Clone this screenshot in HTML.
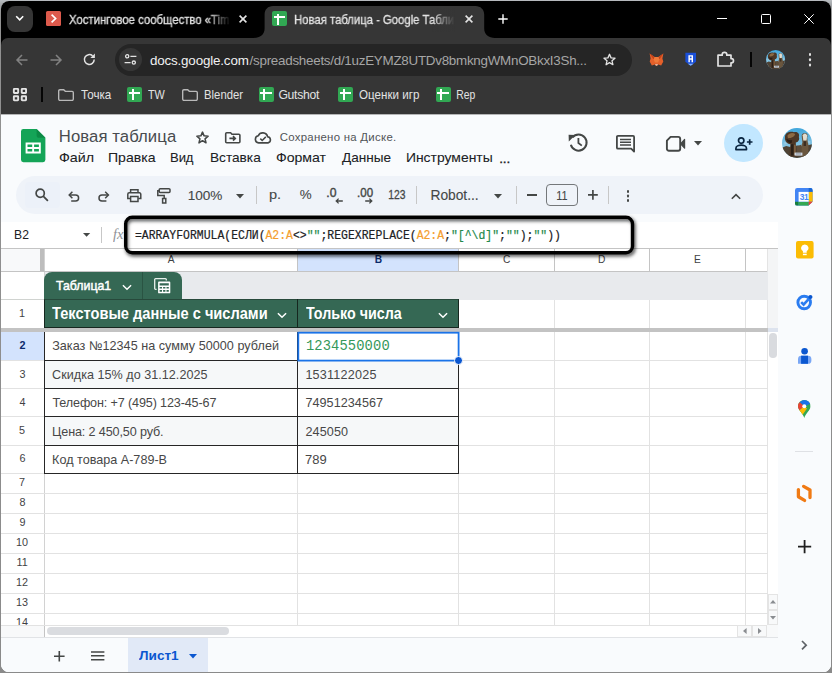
<!DOCTYPE html>
<html lang="ru"><head><meta charset="utf-8"><title>Новая таблица - Google Таблицы</title>
<style>
html,body{margin:0;padding:0}
body{width:832px;height:673px;overflow:hidden;position:relative;background:linear-gradient(#b8bcc0 0,#a6a9ac 4px,#929292 14px,#8a8a8a 100%);font-family:"Liberation Sans",sans-serif}
#win{position:absolute;left:1px;top:1px;width:830px;height:671px;border-radius:8px;overflow:hidden;background:#f9fbfd}
/* every child is positioned in page coordinates: shift by -1,-1 */
#o{position:absolute;left:-1px;top:-1px;width:832px;height:673px}
.a,.t,svg{position:absolute}
.t{white-space:pre;display:block}
svg{overflow:visible}

</style></head>
<body>
<div id="win">
<div id="o">
<!-- browser chrome -->
<div class="a" style="left:0;top:0;width:832px;height:52px;background:#000"></div>
<div class="a" style="left:1px;top:38px;width:830px;height:76px;background:#363636;border-radius:7px 7px 0 0"></div>
<svg style="left:253.5px;top:6px" width="241" height="32" viewBox="0 0 241 32"><path d="M0 32 C6 32 10.6 28.5 10.6 22.5 L10.6 8.5 C10.6 3.5 14 0 19 0 L221.5 0 C226.5 0 230.2 3.5 230.2 8.5 L230.2 22.5 C230.2 28.5 234.8 32 240.8 32 Z" fill="#363636"/></svg>
<div class="a" style="left:7px;top:6px;width:26px;height:26px;border-radius:8px;background:#363636"></div>
<svg style="left:15.2px;top:15.2px" width="9.4" height="7" viewBox="0 0 9.4 7"><path d="M1.2 1.3 L4.7 4.8 L8.2 1.3" fill="none" stroke="#fff" stroke-width="1.6"/></svg>
<div class="a" style="left:46.3px;top:11.4px;width:15.2px;height:15px;border-radius:1.5px;background:#dd5a4c"></div>
<svg style="left:46.3px;top:11.4px" width="15.2" height="15" viewBox="0 0 15.2 15"><path d="M5.6 3.6 L9.6 7.5 L5.6 11.4" fill="none" stroke="#fff" stroke-width="1.7"/></svg>
<svg style="left:239.4px;top:15.2px" width="8" height="8" viewBox="0 0 8 8"><path d="M0.6 0.6 L7.4 7.4 M7.4 0.6 L0.6 7.4" fill="none" stroke="#e3e3e3" stroke-width="1.6"/></svg>
<div class="a" style="left:272px;top:11.4px;width:15px;height:15px;border-radius:2px;background:#31a853"></div><div class="a" style="left:276.50px;top:13.65px;width:2px;height:10.95px;background:#fff"></div><div class="a" style="left:273.50px;top:16.20px;width:11.70px;height:2px;background:#fff"></div>
<svg style="left:464.6px;top:15.2px" width="8" height="8" viewBox="0 0 8 8"><path d="M0.6 0.6 L7.4 7.4 M7.4 0.6 L0.6 7.4" fill="none" stroke="#e3e3e3" stroke-width="1.6"/></svg>
<svg style="left:497.7px;top:14px" width="10" height="10" viewBox="0 0 10 10"><path d="M5 0.3 V9.7 M0.3 5 H9.7" fill="none" stroke="#fff" stroke-width="1.4"/></svg>
<div class="a" style="left:717px;top:18px;width:10px;height:1px;background:#fff"></div>
<div class="a" style="left:761px;top:14px;width:8px;height:8px;border:1px solid #fff;border-radius:1.5px"></div>
<svg style="left:804px;top:14px" width="10" height="10" viewBox="0 0 10 10"><path d="M0.3 0.3 L9.7 9.7 M9.7 0.3 L0.3 9.7" fill="none" stroke="#fff" stroke-width="1"/></svg>
<svg style="left:15.7px;top:53.6px" width="12" height="12" viewBox="0 0 12 12"><path d="M11.5 6 H1.3 M6 1 L1 6 L6 11" fill="none" stroke="#828282" stroke-width="1.5"/></svg>
<svg style="left:49.8px;top:53.6px" width="12" height="12" viewBox="0 0 12 12"><path d="M0.5 6 H10.7 M6 1 L11 6 L6 11" fill="none" stroke="#828282" stroke-width="1.5"/></svg>
<svg style="left:83.4px;top:53.2px" width="13" height="13" viewBox="0 0 13 13"><path d="M11.2 6.5 A4.9 4.9 0 1 1 9.6 2.9" fill="none" stroke="#e3e3e3" stroke-width="1.5"/><path d="M7.4 4.9 H11.9 V0.6 Z" fill="#e3e3e3"/></svg>
<div class="a" style="left:115px;top:44px;width:517px;height:32px;border-radius:16px;background:#252525"></div>
<div class="a" style="left:118.8px;top:48px;width:23.4px;height:23.4px;border-radius:50%;background:#363636"></div>
<svg style="left:124px;top:53.4px" width="13" height="13" viewBox="0 0 13 13"><g fill="none" stroke="#e3e3e3" stroke-width="1.3"><circle cx="3.2" cy="3.3" r="1.6"/><path d="M6.4 3.3 H12.4"/><circle cx="9.8" cy="9.6" r="1.6"/><path d="M0.6 9.6 H6.6"/></g></svg>
<span class="t" style="left:149.90px;top:54px;font:normal 13.4px/1 'Liberation Sans', sans-serif;color:#f1f1f1;letter-spacing:-0.164px;">docs.google.com</span>
<span class="t" style="left:249.60px;top:54px;font:normal 13.4px/1 'Liberation Sans', sans-serif;color:#a6a6a6;letter-spacing:-0.264px;">/spreadsheets/d/1uzEYMZ8UTDv8bmkngWMnOBkxI3Sh...</span>
<svg style="left:601.5px;top:52.3px" width="15" height="15" viewBox="0 0 24 24"><path d="M12 3.6 L14.5 9.4 L20.8 9.95 L16 14.1 L17.45 20.3 L12 17 L6.55 20.3 L8 14.1 L3.2 9.95 L9.5 9.4 Z" fill="none" stroke="#e3e3e3" stroke-width="2.1" stroke-linejoin="round"/></svg>
<svg style="left:649.4px;top:53px" width="15" height="14" viewBox="0 0 15 14"><path d="M0.6 0.5 L5.6 4 H9.4 L14.4 0.5 L13.4 5.6 L14.3 8.6 L12.2 12.4 L9 11.6 L8 13 H7 L6 11.6 L2.8 12.4 L0.7 8.6 L1.6 5.6 Z" fill="#e4602a"/><path d="M0.6 0.5 L5.6 4 L4.6 6.6 Z M14.4 0.5 L9.4 4 L10.4 6.6 Z" fill="#c2421a"/><path d="M5.6 4 H9.4 L10.4 6.6 L9 9.4 H6 L4.6 6.6 Z" fill="#ee7a3a"/><path d="M6 11.2 H9 L8.2 12.6 H6.8 Z" fill="#d9d2c8"/></svg>
<svg style="left:685.4px;top:52.4px" width="11.4" height="14.6" viewBox="0 0 12 15"><path d="M0.4 0.6 H11.6 V10.2 L6 14.4 L0.4 10.2 Z" fill="#1a4fd8"/><path d="M3.6 3.2 H8.4 V10.6 H6.9 V7.9 H5.1 V10.6 H3.6 Z M5.1 4.6 V6.4 H6.9 V4.6 Z" fill="#fff"/><path d="M3 12.3 L6 14.4 L9 12.3 Z" fill="#7fb0ff"/></svg>
<svg style="left:717.2px;top:50.6px" width="18" height="16.4" viewBox="0 0 18 16.4"><path d="M1 4.2 H5.2 V3.6 A2.3 2.3 0 0 1 9.8 3.6 V4.2 H14 V7.6 H14.4 A2.1 2.1 0 0 1 14.4 11.8 H14 V15 H1 Z" fill="none" stroke="#e3e3e3" stroke-width="1.7" stroke-linejoin="round"/></svg>
<div class="a" style="left:750px;top:52px;width:1.9px;height:15px;background:#050505"></div>
<svg style="left:766.4px;top:50.0px" width="19.2" height="19.2" viewBox="0 0 100 100"><defs><clipPath id="av1"><circle cx="50" cy="50" r="50"/></clipPath><linearGradient id="sk1" x1="0" y1="0" x2="0" y2="1"><stop offset="0" stop-color="#3fa6dc"/><stop offset="0.6" stop-color="#86c4e2"/></linearGradient></defs><g clip-path="url(#av1)"><rect width="100" height="100" fill="url(#sk1)"/><path d="M0 66 L14 60 L30 64 L50 58 L70 62 L100 54 V100 H0 Z" fill="#4f4234"/><path d="M8 46 L20 50 L8 56 Z M84 40 L96 46 L90 54 Z" fill="#9bcbe4"/><path d="M10 30 C10 16 26 10 40 14 C52 10 60 20 56 30 C60 38 54 48 46 48 L48 96 H24 L28 54 C16 54 8 42 10 30 Z" fill="#4d3726"/><path d="M18 26 C24 16 36 14 44 20 C42 28 32 34 20 34 Z" fill="#8c6a44"/><path d="M14 36 C20 40 28 42 34 40 L32 50 C24 52 16 46 14 36 Z" fill="#2a1e16"/><path d="M30 54 H38 V92 H30 Z" fill="#2a2018"/><path d="M40 56 H46 V90 H40 Z" fill="#7a5e40"/><path d="M66 30 C64 20 70 16 76 18 C84 16 88 24 84 32 L86 48 C90 56 88 72 86 96 H66 C64 76 62 60 68 48 Z" fill="#6a563e"/><path d="M69 24 C72 17 81 17 84 25 L82 42 H71 Z" fill="#e2dccf"/><path d="M72 44 H80 V60 H72 Z" fill="#3a2d22"/><path d="M50 60 L64 56 V80 H50 Z" fill="#5c4c3a"/><rect x="42" y="82" width="26" height="10" fill="#d3dbe6"/><rect x="46" y="85" width="18" height="3" fill="#7a8088"/></g></svg>
<div class="a" style="left:808.7px;top:53.1px;width:2.6px;height:2.6px;border-radius:50%;background:#e3e3e3;box-shadow:0 5.2px 0 #e3e3e3,0 10.4px 0 #e3e3e3"></div>
<svg style="left:0;top:0" width="40" height="110" viewBox="0 0 40 110"><rect x="13.85" y="88.85000000000001" width="4.3" height="4.1" rx="0.5" fill="none" stroke="#e3e3e3" stroke-width="1.9"/><rect x="21.75" y="88.85000000000001" width="4.3" height="4.1" rx="0.5" fill="none" stroke="#e3e3e3" stroke-width="1.9"/><rect x="13.85" y="96.25" width="4.3" height="4.1" rx="0.5" fill="none" stroke="#e3e3e3" stroke-width="1.9"/><rect x="21.75" y="96.25" width="4.3" height="4.1" rx="0.5" fill="none" stroke="#e3e3e3" stroke-width="1.9"/></svg>
<div class="a" style="left:40.8px;top:87.2px;width:1.9px;height:14.7px;background:#050505"></div>
<svg style="left:57.5px;top:88.6px" width="16" height="12" viewBox="0 0 16 12"><path d="M1.9 0.7 H5.7 L7.3 2.3 H14.1 A1.2 1.2 0 0 1 15.3 3.5 V10.1 A1.2 1.2 0 0 1 14.1 11.3 H1.9 A1.2 1.2 0 0 1 0.7 10.1 V1.9 A1.2 1.2 0 0 1 1.9 0.7 Z" fill="none" stroke="#b9b9b9" stroke-width="1.35"/></svg>
<span class="t" style="left:80.60px;top:89px;font:normal 12.2px/1 'Liberation Sans', sans-serif;color:#e3e3e3;transform:scaleX(0.9531);transform-origin:0px 0;">Точка</span>
<div class="a" style="left:127px;top:87px;width:15px;height:15px;border-radius:2px;background:#31a853"></div><div class="a" style="left:131.50px;top:89.25px;width:2px;height:10.95px;background:#fff"></div><div class="a" style="left:128.50px;top:91.80px;width:11.70px;height:2px;background:#fff"></div>
<span class="t" style="left:148.10px;top:89px;font:normal 12.2px/1 'Liberation Sans', sans-serif;color:#e3e3e3;transform:scaleX(0.8895);transform-origin:0px 0;">TW</span>
<svg style="left:181.5px;top:88.6px" width="16" height="12" viewBox="0 0 16 12"><path d="M1.9 0.7 H5.7 L7.3 2.3 H14.1 A1.2 1.2 0 0 1 15.3 3.5 V10.1 A1.2 1.2 0 0 1 14.1 11.3 H1.9 A1.2 1.2 0 0 1 0.7 10.1 V1.9 A1.2 1.2 0 0 1 1.9 0.7 Z" fill="none" stroke="#b9b9b9" stroke-width="1.35"/></svg>
<span class="t" style="left:204.30px;top:89px;font:normal 12.2px/1 'Liberation Sans', sans-serif;color:#e3e3e3;transform:scaleX(0.9268);transform-origin:1px 0;">Blender</span>
<div class="a" style="left:258.5px;top:87px;width:15px;height:15px;border-radius:2px;background:#31a853"></div><div class="a" style="left:263.00px;top:89.25px;width:2px;height:10.95px;background:#fff"></div><div class="a" style="left:260.00px;top:91.80px;width:11.70px;height:2px;background:#fff"></div>
<span class="t" style="left:278.40px;top:89px;font:normal 12.2px/1 'Liberation Sans', sans-serif;color:#e3e3e3;letter-spacing:-0.300px;">Gutshot</span>
<div class="a" style="left:338px;top:87px;width:15px;height:15px;border-radius:2px;background:#31a853"></div><div class="a" style="left:342.50px;top:89.25px;width:2px;height:10.95px;background:#fff"></div><div class="a" style="left:339.50px;top:91.80px;width:11.70px;height:2px;background:#fff"></div>
<span class="t" style="left:359.40px;top:89px;font:normal 12.2px/1 'Liberation Sans', sans-serif;color:#e3e3e3;transform:scaleX(0.9524);transform-origin:0px 0;">Оценки игр</span>
<div class="a" style="left:435.6px;top:87px;width:15px;height:15px;border-radius:2px;background:#31a853"></div><div class="a" style="left:440.10px;top:89.25px;width:2px;height:10.95px;background:#fff"></div><div class="a" style="left:437.10px;top:91.80px;width:11.70px;height:2px;background:#fff"></div>
<span class="t" style="left:456.10px;top:89px;font:normal 12.2px/1 'Liberation Sans', sans-serif;color:#e3e3e3;transform:scaleX(0.8524);transform-origin:1px 0;">Rep</span>
<!-- sheets header -->
<div class="a" style="left:0;top:114px;width:832px;height:559px;background:#f9fbfd"></div>
<div class="a" style="left:0;top:114px;width:832px;height:1px;background:#b4b5b6"></div>
<svg style="left:21px;top:129px" width="24.4" height="33.2" viewBox="0 0 24.4 33.2"><path d="M2.4 0 H15.6 L24.4 8.8 V30.8 A2.4 2.4 0 0 1 22 33.2 H2.4 A2.4 2.4 0 0 1 0 30.8 V2.4 A2.4 2.4 0 0 1 2.4 0 Z" fill="#14a457"/><path d="M15.6 0 L24.4 8.8 H17.6 A2 2 0 0 1 15.6 6.8 Z" fill="#0c8a45"/><path d="M4.6 13.6 H19.8 V24.4 H4.6 Z M6.5 15.5 V18 H11.2 V15.5 Z M13.1 15.5 V18 H17.9 V15.5 Z M6.5 19.9 V22.5 H11.2 V19.9 Z M13.1 19.9 V22.5 H17.9 V19.9 Z" fill="#fff" fill-rule="evenodd"/></svg>
<span class="t" style="left:58.80px;top:129px;font:normal 16.7px/1 'Liberation Sans', sans-serif;color:#484b4f;letter-spacing:0.083px;">Новая таблица</span>
<svg style="left:195px;top:130.2px" width="15" height="15" viewBox="0 0 24 24"><path d="M12 3.4 L14.55 9.35 L21 9.9 L16.1 14.15 L17.6 20.5 L12 17.1 L6.4 20.5 L7.9 14.15 L3 9.9 L9.45 9.35 Z" fill="none" stroke="#444746" stroke-width="2.5" stroke-linejoin="round"/></svg>
<svg style="left:225px;top:131.6px" width="15.6" height="11.4" viewBox="0 0 15.6 11.4"><path d="M1.7 0.7 H5.6 L7 2.2 H13.9 A1 1 0 0 1 14.9 3.2 V9.7 A1 1 0 0 1 13.9 10.7 H1.7 A1 1 0 0 1 0.7 9.7 V1.7 A1 1 0 0 1 1.7 0.7 Z" fill="none" stroke="#444746" stroke-width="1.6"/><path d="M4.4 6.4 H10 M8 4.2 L10.3 6.4 L8 8.6" fill="none" stroke="#444746" stroke-width="1.6"/></svg>
<svg style="left:254.2px;top:131.6px" width="18" height="11.6" viewBox="0 0 18 11.6"><path d="M4.6 10.9 A3.6 3.6 0 0 1 4.2 3.8 A5 5 0 0 1 13.6 4.7 A3.15 3.15 0 0 1 14 10.9 Z" fill="none" stroke="#444746" stroke-width="1.6" stroke-linejoin="round"/><path d="M6.3 6.6 L8.2 8.5 L11.8 4.9" fill="none" stroke="#444746" stroke-width="1.5"/></svg>
<span class="t" style="left:279.70px;top:132px;font:normal 11.4px/1 'Liberation Sans', sans-serif;color:#515458;letter-spacing:0.283px;">Сохранено на Диске.</span>
<span class="t" style="left:59.00px;top:151px;font:normal 13.1px/1 'Liberation Sans', sans-serif;color:#202124;transform:scaleX(1.0917);transform-origin:1px 0;-webkit-text-stroke:0.08px #202124;">Файл</span>
<span class="t" style="left:107.75px;top:151px;font:normal 13.1px/1 'Liberation Sans', sans-serif;color:#202124;transform:scaleX(1.0756);transform-origin:1px 0;-webkit-text-stroke:0.08px #202124;">Правка</span>
<span class="t" style="left:170.10px;top:151px;font:normal 13.1px/1 'Liberation Sans', sans-serif;color:#202124;letter-spacing:-0.175px;-webkit-text-stroke:0.08px #202124;">Вид</span>
<span class="t" style="left:209.90px;top:151px;font:normal 13.1px/1 'Liberation Sans', sans-serif;color:#202124;transform:scaleX(1.0437);transform-origin:1px 0;-webkit-text-stroke:0.08px #202124;">Вставка</span>
<span class="t" style="left:276.00px;top:151px;font:normal 13.1px/1 'Liberation Sans', sans-serif;color:#202124;transform:scaleX(1.0778);transform-origin:1px 0;-webkit-text-stroke:0.08px #202124;">Формат</span>
<span class="t" style="left:341.60px;top:151px;font:normal 13.1px/1 'Liberation Sans', sans-serif;color:#202124;transform:scaleX(1.0362);transform-origin:0px 0;-webkit-text-stroke:0.08px #202124;">Данные</span>
<span class="t" style="left:405.90px;top:151px;font:normal 13.1px/1 'Liberation Sans', sans-serif;color:#202124;transform:scaleX(1.0625);transform-origin:1px 0;-webkit-text-stroke:0.08px #202124;">Инструменты</span>
<span class="t" style="left:499.20px;top:152px;font:normal 13.6px/1 'Liberation Sans', sans-serif;color:#202124;letter-spacing:-0.100px;-webkit-text-stroke:0.35px #202124;">...</span>
<svg style="left:567.6px;top:133.2px" width="20" height="19.4" viewBox="0 0 20 19.4"><path d="M4.47 4.46 A8.0 8.0 0 1 1 2.87 11.67" fill="none" stroke="#444746" stroke-width="2"/><path d="M0.6 1.8 L7.4 2 L0.8 8.6 Z" fill="#444746"/><path d="M10.4 5 V10 L13.8 12.6" fill="none" stroke="#444746" stroke-width="1.8"/></svg>
<svg style="left:615.6px;top:134.6px" width="19" height="18.4" viewBox="0 0 19 18.4"><path d="M1.9 0.9 H17.1 A1 1 0 0 1 18.1 1.9 V16.6 L15.2 13.7 H1.9 A1 1 0 0 1 0.9 12.7 V1.9 A1 1 0 0 1 1.9 0.9 Z" fill="none" stroke="#444746" stroke-width="1.8" stroke-linejoin="round"/><path d="M4 4.6 H15 M4 7.3 H15 M4 10 H15" stroke="#444746" stroke-width="1.5"/></svg>
<svg style="left:666px;top:136.2px" width="19.6" height="15.6" viewBox="0 0 19.6 15.6"><path d="M4.6 0.9 H12.2 A2 2 0 0 1 14.2 2.9 V12.7 A2 2 0 0 1 12.2 14.7 H2.9 A2 2 0 0 1 0.9 12.7 V4.6 Z" fill="none" stroke="#444746" stroke-width="1.9" stroke-linejoin="round"/><path d="M14.6 7.8 L18.6 3.4 V12.2 Z" fill="#444746" stroke="#444746" stroke-width="1.2" stroke-linejoin="round"/></svg>
<svg style="left:694.4px;top:140.6px" width="8" height="4.4" viewBox="0 0 8 4.4"><path d="M0 0 H8 L4 4.4 Z" fill="#444746"/></svg>
<div class="a" style="left:724.3px;top:123.6px;width:38.6px;height:38.6px;border-radius:50%;background:#c2e7ff"></div>
<svg style="left:735px;top:137px" width="18" height="13.4" viewBox="0 0 18 13.4"><g fill="none" stroke="#0a2540" stroke-width="1.7"><circle cx="6.2" cy="3.6" r="2.7"/><path d="M0.9 12.6 V11.4 C0.9 9.4 3.6 8.2 6.2 8.2 C8.8 8.2 11.5 9.4 11.5 11.4 V12.6 Z" stroke-linejoin="round"/><path d="M11.9 5 H17.5 M14.7 2.2 V7.8"/></g></svg>
<svg style="left:782px;top:127.80000000000001px" width="30" height="30" viewBox="0 0 100 100"><defs><clipPath id="av2"><circle cx="50" cy="50" r="50"/></clipPath><linearGradient id="sk2" x1="0" y1="0" x2="0" y2="1"><stop offset="0" stop-color="#3fa6dc"/><stop offset="0.6" stop-color="#86c4e2"/></linearGradient></defs><g clip-path="url(#av2)"><rect width="100" height="100" fill="url(#sk2)"/><path d="M0 66 L14 60 L30 64 L50 58 L70 62 L100 54 V100 H0 Z" fill="#4f4234"/><path d="M8 46 L20 50 L8 56 Z M84 40 L96 46 L90 54 Z" fill="#9bcbe4"/><path d="M10 30 C10 16 26 10 40 14 C52 10 60 20 56 30 C60 38 54 48 46 48 L48 96 H24 L28 54 C16 54 8 42 10 30 Z" fill="#4d3726"/><path d="M18 26 C24 16 36 14 44 20 C42 28 32 34 20 34 Z" fill="#8c6a44"/><path d="M14 36 C20 40 28 42 34 40 L32 50 C24 52 16 46 14 36 Z" fill="#2a1e16"/><path d="M30 54 H38 V92 H30 Z" fill="#2a2018"/><path d="M40 56 H46 V90 H40 Z" fill="#7a5e40"/><path d="M66 30 C64 20 70 16 76 18 C84 16 88 24 84 32 L86 48 C90 56 88 72 86 96 H66 C64 76 62 60 68 48 Z" fill="#6a563e"/><path d="M69 24 C72 17 81 17 84 25 L82 42 H71 Z" fill="#e2dccf"/><path d="M72 44 H80 V60 H72 Z" fill="#3a2d22"/><path d="M50 60 L64 56 V80 H50 Z" fill="#5c4c3a"/><rect x="42" y="82" width="26" height="10" fill="#d3dbe6"/><rect x="46" y="85" width="18" height="3" fill="#7a8088"/></g></svg>
<div class="a" style="left:16.2px;top:176.2px;width:747px;height:37.6px;border-radius:19px;background:#eff3f9"></div>
<div class="a" style="left:24.8px;top:182.2px;width:35px;height:26px;border-radius:4px;background:#ecf1f9"></div>
<svg style="left:35px;top:188.2px" width="13.6" height="13.6" viewBox="0 0 13.6 13.6"><circle cx="5.2" cy="5.2" r="4.1" fill="none" stroke="#444746" stroke-width="1.7"/><path d="M8.2 8.2 L12.9 12.9" stroke="#444746" stroke-width="1.8"/></svg>
<svg style="left:68.4px;top:191.2px" width="11.6" height="10.8" viewBox="0 0 11.6 10.8"><path d="M1.4 4 H7.6 A3 3 0 0 1 7.6 10 H3.2" fill="none" stroke="#444746" stroke-width="1.5"/><path d="M4.4 0.8 L1.2 4 L4.4 7.2" fill="none" stroke="#444746" stroke-width="1.5"/></svg>
<svg style="left:98.2px;top:191.2px" width="11.6" height="10.8" viewBox="0 0 11.6 10.8"><path d="M10.2 4 H4 A3 3 0 0 0 4 10 H8.4" fill="none" stroke="#444746" stroke-width="1.5"/><path d="M7.2 0.8 L10.4 4 L7.2 7.2" fill="none" stroke="#444746" stroke-width="1.5"/></svg>
<svg style="left:127.2px;top:189px" width="14.6" height="13.2" viewBox="0 0 14.6 13.2"><path d="M3.6 3.6 V0.8 H11 V3.6" fill="none" stroke="#444746" stroke-width="1.5"/><path d="M3.4 9.6 H0.8 V5.2 A1.4 1.4 0 0 1 2.2 3.8 H12.4 A1.4 1.4 0 0 1 13.8 5.2 V9.6 H11.2" fill="none" stroke="#444746" stroke-width="1.5"/><path d="M3.6 7.6 H11 V12.4 H3.6 Z" fill="none" stroke="#444746" stroke-width="1.5"/></svg>
<svg style="left:157px;top:188.4px" width="13.8" height="15.8" viewBox="0 0 13.8 15.8"><path d="M3.2 0.8 H12 A1 1 0 0 1 13 1.8 V3.6 A1 1 0 0 1 12 4.6 H3.2 A1 1 0 0 1 2.2 3.6 V1.8 A1 1 0 0 1 3.2 0.8 Z" fill="none" stroke="#444746" stroke-width="1.5"/><path d="M2.2 2.7 H0.8 V7.4 H7.2 V10.2" fill="none" stroke="#444746" stroke-width="1.5"/><path d="M5.6 10.4 H8.8 V15 H5.6 Z" fill="none" stroke="#444746" stroke-width="1.5"/></svg>
<span class="t" style="left:187.80px;top:189px;font:normal 13.6px/1 'Liberation Sans', sans-serif;color:#444746;letter-spacing:-0.100px;-webkit-text-stroke:0.1px #444746;">100%</span>
<svg style="left:235.5px;top:193.7px" width="8" height="4.4" viewBox="0 0 8 4.4"><path d="M0 0 H8 L4 4.4 Z" fill="#444746"/></svg>
<div class="a" style="left:255.5px;top:185.6px;width:1px;height:18.4px;background:#c7c7c7"></div>
<span class="t" style="left:268.70px;top:188px;font:normal 13.4px/1 'Liberation Sans', sans-serif;color:#444746;transform:scaleX(1.0889);transform-origin:1px 0;-webkit-text-stroke:0.1px #444746;">р.</span>
<span class="t" style="left:299.80px;top:188px;font:normal 13.4px/1 'Liberation Sans', sans-serif;color:#444746;-webkit-text-stroke:0.1px #444746;">%</span>
<span class="t" style="left:326.20px;top:187px;font:normal 12.2px/1 'Liberation Sans', sans-serif;color:#444746;letter-spacing:0.100px;-webkit-text-stroke:0.4px #444746;">.0</span>
<svg style="left:335.2px;top:197.6px" width="8" height="6" viewBox="0 0 8 6"><path d="M7.8 3 H1.2 M3.6 0.6 L1.2 3 L3.6 5.4" fill="none" stroke="#444746" stroke-width="1.3"/></svg>
<span class="t" style="left:356.70px;top:187px;font:normal 12.2px/1 'Liberation Sans', sans-serif;color:#444746;transform:scaleX(0.9438);transform-origin:1px 0;-webkit-text-stroke:0.4px #444746;">.00</span>
<svg style="left:364.8px;top:197.6px" width="8" height="6" viewBox="0 0 8 6"><path d="M0.2 3 H6.8 M4.4 0.6 L6.8 3 L4.4 5.4" fill="none" stroke="#444746" stroke-width="1.3"/></svg>
<span class="t" style="left:387.60px;top:189px;font:normal 12.6px/1 'Liberation Sans', sans-serif;color:#444746;transform:scaleX(0.8200);transform-origin:1px 0;-webkit-text-stroke:0.3px #444746;">123</span>
<div class="a" style="left:415.5px;top:185.6px;width:1px;height:18.4px;background:#c7c7c7"></div>
<span class="t" style="left:430.60px;top:189px;font:normal 13.8px/1 'Liberation Sans', sans-serif;color:#444746;letter-spacing:-0.057px;-webkit-text-stroke:0.1px #444746;">Robot...</span>
<svg style="left:494px;top:193.7px" width="8" height="4.4" viewBox="0 0 8 4.4"><path d="M0 0 H8 L4 4.4 Z" fill="#444746"/></svg>
<div class="a" style="left:516px;top:185.6px;width:1px;height:18.4px;background:#c7c7c7"></div>
<div class="a" style="left:527px;top:193.9px;width:10px;height:1.7px;background:#444746"></div>
<div class="a" style="left:546.1px;top:183.8px;width:30px;height:20.4px;border:1px solid #74777a;border-radius:4px"></div>
<span class="t" style="left:556.30px;top:189px;font:normal 13.2px/1 'Liberation Sans', sans-serif;color:#444746;transform:scaleX(0.8250);transform-origin:1px 0;-webkit-text-stroke:0.1px #444746;">11</span>
<svg style="left:587.6px;top:190px" width="9.8" height="9.8" viewBox="0 0 9.8 9.8"><path d="M4.9 0 V9.8 M0 4.9 H9.8" stroke="#444746" stroke-width="1.7"/></svg>
<div class="a" style="left:607.6px;top:185.6px;width:1px;height:18.4px;background:#c7c7c7"></div>
<div class="a" style="left:626.5px;top:190px;width:2.6px;height:2.6px;border-radius:50%;background:#444746;box-shadow:0 4.5px 0 #444746,0 9px 0 #444746"></div>
<svg style="left:731.4px;top:192.6px" width="10" height="7" viewBox="0 0 10 7"><path d="M0.8 5.8 L5 1.6 L9.2 5.8" fill="none" stroke="#444746" stroke-width="1.6"/></svg>
<!-- formula bar + grid -->
<div class="a" style="left:1px;top:221.5px;width:777px;height:416px;background:#fff;"></div>
<div class="a" style="left:1px;top:248px;width:777px;height:1px;background:#c4c4c4;"></div>
<span class="t" style="left:14.00px;top:228px;font:normal 13px/1 'Liberation Sans', sans-serif;color:#202124;transform:scaleX(0.9333);transform-origin:1px 0;">B2</span>
<svg style="left:82.5px;top:233px" width="7.2" height="3.8" viewBox="0 0 7.2 3.8"><path d="M0 0 H7.2 L3.6 3.8 Z" fill="#444746"/></svg>
<div class="a" style="left:101px;top:227px;width:1px;height:16px;background:#c7c7c7;"></div>
<span class="t" style="left:112.60px;top:227px;font:italic normal 15px/1 'Liberation Serif', serif;color:#8f9296;transform:scaleX(0.9636);transform-origin:0px 0;">fx</span>
<div class="a" style="left:1px;top:249px;width:44px;height:22px;background:#f8f9fa;"></div>
<div class="a" style="left:40.4px;top:249px;width:4px;height:22px;background:#bdbdbd;"></div>
<div class="a" style="left:297.5px;top:249px;width:161px;height:22px;background:#d3e3fd;"></div>
<div class="a" style="left:297.0px;top:249px;width:1px;height:22px;background:#c4c4c4;"></div>
<span class="t" style="left:167.75px;top:255px;font:normal 10.2px/1 'Liberation Sans', sans-serif;color:#3f4245;">A</span>
<div class="a" style="left:458.0px;top:249px;width:1px;height:22px;background:#c4c4c4;"></div>
<span class="t" style="left:374.80px;top:255px;font:bold 10.2px/1 'Liberation Sans', sans-serif;color:#0b2a6b;">B</span>
<div class="a" style="left:554.0px;top:249px;width:1px;height:22px;background:#c4c4c4;"></div>
<span class="t" style="left:503.00px;top:255px;font:normal 10.2px/1 'Liberation Sans', sans-serif;color:#3f4245;">C</span>
<div class="a" style="left:649.2px;top:249px;width:1px;height:22px;background:#c4c4c4;"></div>
<span class="t" style="left:598.10px;top:255px;font:normal 10.2px/1 'Liberation Sans', sans-serif;color:#3f4245;">D</span>
<div class="a" style="left:745.0px;top:249px;width:1px;height:22px;background:#c4c4c4;"></div>
<span class="t" style="left:694.10px;top:255px;font:normal 10.2px/1 'Liberation Sans', sans-serif;color:#3f4245;">E</span>
<div class="a" style="left:767.0px;top:249px;width:1px;height:22px;background:#c4c4c4;"></div>
<div class="a" style="left:43.6px;top:249px;width:1px;height:389px;background:#d2d2d2;"></div>
<div class="a" style="left:1px;top:271px;width:767px;height:1px;background:#c4c4c4;"></div>
<div class="a" style="left:767.5px;top:249px;width:10.5px;height:79px;background:#f4f5f6;"></div>
<div class="a" style="left:767.5px;top:331.6px;width:10.5px;height:263px;background:#fff;"></div>
<div class="a" style="left:767px;top:249px;width:1px;height:389px;background:#e4e4e4;"></div>
<div class="a" style="left:45px;top:272px;width:722.5px;height:27.6px;background:#e8eaed;"></div>
<div class="a" style="left:44px;top:271.6px;width:137.7px;height:28.4px;background:#356854;border-radius:8px 8px 0 0"></div>
<div class="a" style="left:142px;top:272px;width:1px;height:27.5px;background:#2a5443;"></div>
<span class="t" style="left:56.20px;top:279px;font:normal 13.6px/1 'Liberation Sans', sans-serif;color:#fff;transform:scaleX(0.9067);transform-origin:0px 0;-webkit-text-stroke:0.5px #fff;">Таблица1</span>
<svg style="left:122px;top:283.6px" width="10" height="7" viewBox="0 0 10 7"><path d="M0.9 1.2 L5 5.3 L9.1 1.2" fill="none" stroke="#fff" stroke-width="1.4"/></svg>
<svg style="left:153.6px;top:278px" width="17" height="16" viewBox="0 0 17 16"><path d="M2.6 11.4 H1.6 A0.9 0.9 0 0 1 0.7 10.5 V1.6 A0.9 0.9 0 0 1 1.6 0.7 H11.4 A0.9 0.9 0 0 1 12.3 1.6 V2.4" fill="none" stroke="#e8f0ec" stroke-width="1.3"/><path d="M5 3.6 H15.4 A0.9 0.9 0 0 1 16.3 4.5 V14.4 A0.9 0.9 0 0 1 15.4 15.3 H5 A0.9 0.9 0 0 1 4.1 14.4 V4.5 A0.9 0.9 0 0 1 5 3.6 Z M5.6 5.2 V7.4 H14.8 V5.2 Z M5.6 9 V10.6 H8 V9 Z M9.1 9 V10.6 H11.4 V9 Z M12.5 9 V10.6 H14.8 V9 Z M5.6 12.1 V13.8 H8 V12.1 Z M9.1 12.1 V13.8 H11.4 V12.1 Z M12.5 12.1 V13.8 H14.8 V12.1 Z" fill="#fff" fill-rule="evenodd"/></svg>
<div class="a" style="left:44px;top:299px;width:415px;height:29px;background:#356854;box-sizing:border-box;border:1px solid #16271f;border-top-color:#27493b"></div>
<div class="a" style="left:297px;top:299px;width:1px;height:29px;background:#16271f;"></div>
<span class="t" style="left:51.80px;top:306px;font:bold 15.7px/1 'Liberation Sans', sans-serif;color:#fff;transform:scaleX(0.9307);transform-origin:0px 0;">Текстовые данные с числами</span>
<span class="t" style="left:305.60px;top:306px;font:bold 15.7px/1 'Liberation Sans', sans-serif;color:#fff;transform:scaleX(0.9105);transform-origin:0px 0;">Только числа</span>
<svg style="left:277.2px;top:312.2px" width="10" height="7" viewBox="0 0 10 7"><path d="M0.9 1.2 L5 5.3 L9.1 1.2" fill="none" stroke="#fff" stroke-width="1.5"/></svg>
<svg style="left:438px;top:312.2px" width="10" height="7" viewBox="0 0 10 7"><path d="M0.9 1.2 L5 5.3 L9.1 1.2" fill="none" stroke="#fff" stroke-width="1.5"/></svg>
<div class="a" style="left:45px;top:361px;width:413px;height:27.4px;background:#f6f8f9;"></div>
<div class="a" style="left:45px;top:417.4px;width:413px;height:27.4px;background:#f6f8f9;"></div>
<div class="a" style="left:1px;top:332px;width:43px;height:28.2px;background:#d3e3fd;"></div>
<div class="a" style="left:1px;top:359.9px;width:766.5px;height:1px;background:#e2e2e2;"></div>
<div class="a" style="left:1px;top:388.1px;width:766.5px;height:1px;background:#e2e2e2;"></div>
<div class="a" style="left:1px;top:416.3px;width:766.5px;height:1px;background:#e2e2e2;"></div>
<div class="a" style="left:1px;top:444.5px;width:766.5px;height:1px;background:#e2e2e2;"></div>
<div class="a" style="left:1px;top:472.8px;width:766.5px;height:1px;background:#e2e2e2;"></div>
<div class="a" style="left:1px;top:492.8px;width:766.5px;height:1px;background:#e2e2e2;"></div>
<div class="a" style="left:1px;top:512.8px;width:766.5px;height:1px;background:#e2e2e2;"></div>
<div class="a" style="left:1px;top:532.8px;width:766.5px;height:1px;background:#e2e2e2;"></div>
<div class="a" style="left:1px;top:552.8px;width:766.5px;height:1px;background:#e2e2e2;"></div>
<div class="a" style="left:1px;top:572.8px;width:766.5px;height:1px;background:#e2e2e2;"></div>
<div class="a" style="left:1px;top:592.8px;width:766.5px;height:1px;background:#e2e2e2;"></div>
<div class="a" style="left:1px;top:612.8px;width:766.5px;height:1px;background:#e2e2e2;"></div>
<div class="a" style="left:297.0px;top:473px;width:1px;height:152px;background:#e2e2e2;"></div>
<div class="a" style="left:458.0px;top:473px;width:1px;height:152px;background:#e2e2e2;"></div>
<div class="a" style="left:554.0px;top:299.5px;width:1px;height:325.5px;background:#e2e2e2;"></div>
<div class="a" style="left:649.2px;top:299.5px;width:1px;height:325.5px;background:#e2e2e2;"></div>
<div class="a" style="left:745.0px;top:299.5px;width:1px;height:325.5px;background:#e2e2e2;"></div>
<div class="a" style="left:458px;top:473.3px;width:1px;height:152px;background:#e2e2e2;"></div>
<div class="a" style="left:297px;top:473.3px;width:1px;height:152px;background:#e2e2e2;"></div>
<div class="a" style="left:1px;top:299px;width:43px;height:1px;background:#d0d3d0;"></div>
<div class="a" style="left:44px;top:331.6px;width:1px;height:142.4px;background:#262626;"></div>
<div class="a" style="left:297px;top:332px;width:1px;height:142px;background:#262626;"></div>
<div class="a" style="left:458px;top:332px;width:1px;height:142px;background:#262626;"></div>
<div class="a" style="left:44px;top:360px;width:415px;height:1.1px;background:#262626;"></div>
<div class="a" style="left:44px;top:388.2px;width:415px;height:1.1px;background:#262626;"></div>
<div class="a" style="left:44px;top:416.4px;width:415px;height:1.1px;background:#262626;"></div>
<div class="a" style="left:44px;top:444.6px;width:415px;height:1.1px;background:#262626;"></div>
<div class="a" style="left:44px;top:473px;width:415px;height:1.1px;background:#262626;"></div>
<div class="a" style="left:1px;top:328.2px;width:766.5px;height:3.4px;background:#c3c3c3;"></div>
<div class="a" style="left:767.5px;top:328.2px;width:10.5px;height:3.4px;background:#dde3ee;"></div>
<span class="t" style="left:18.90px;top:308px;font:normal 10.8px/1 'Liberation Sans', sans-serif;color:#3f4245;">1</span>
<span class="t" style="left:19.60px;top:340px;font:bold 10.8px/1 'Liberation Sans', sans-serif;color:#0b2a6b;">2</span>
<span class="t" style="left:19.60px;top:369px;font:normal 10.8px/1 'Liberation Sans', sans-serif;color:#3f4245;">3</span>
<span class="t" style="left:19.60px;top:397px;font:normal 10.8px/1 'Liberation Sans', sans-serif;color:#3f4245;">4</span>
<span class="t" style="left:19.10px;top:425px;font:normal 10.8px/1 'Liberation Sans', sans-serif;color:#3f4245;">5</span>
<span class="t" style="left:19.60px;top:453px;font:normal 10.8px/1 'Liberation Sans', sans-serif;color:#3f4245;">6</span>
<span class="t" style="left:19.10px;top:477px;font:normal 10.8px/1 'Liberation Sans', sans-serif;color:#3f4245;">7</span>
<span class="t" style="left:19.60px;top:497px;font:normal 10.8px/1 'Liberation Sans', sans-serif;color:#3f4245;">8</span>
<span class="t" style="left:19.60px;top:517px;font:normal 10.8px/1 'Liberation Sans', sans-serif;color:#3f4245;">9</span>
<span class="t" style="left:16.10px;top:537px;font:normal 10.8px/1 'Liberation Sans', sans-serif;color:#3f4245;">10</span>
<span class="t" style="left:16.60px;top:557px;font:normal 10.8px/1 'Liberation Sans', sans-serif;color:#3f4245;">11</span>
<span class="t" style="left:16.10px;top:577px;font:normal 10.8px/1 'Liberation Sans', sans-serif;color:#3f4245;">12</span>
<span class="t" style="left:16.10px;top:597px;font:normal 10.8px/1 'Liberation Sans', sans-serif;color:#3f4245;">13</span>
<div class="a" style="left:1px;top:613.8px;width:43px;height:11.200000000000045px;overflow:hidden"><div class="a" style="left:-1px;top:-613.8px">
<span class="t" style="left:16.10px;top:617px;font:normal 10.8px/1 'Liberation Sans', sans-serif;color:#3f4245;">14</span>
</div></div>
<span class="t" style="left:52.20px;top:340px;font:normal 12.6px/1 'Liberation Sans', sans-serif;color:#474747;letter-spacing:0.036px;">Заказ №12345 на сумму 50000 рублей</span>
<span class="t" style="left:52.10px;top:369px;font:normal 12.6px/1 'Liberation Sans', sans-serif;color:#474747;letter-spacing:0.022px;">Скидка 15% до 31.12.2025</span>
<span class="t" style="left:52.50px;top:397px;font:normal 12.6px/1 'Liberation Sans', sans-serif;color:#474747;letter-spacing:-0.135px;">Телефон: +7 (495) 123-45-67</span>
<span class="t" style="left:52.10px;top:426px;font:normal 12.6px/1 'Liberation Sans', sans-serif;color:#474747;letter-spacing:-0.133px;">Цена: 2 450,50 руб.</span>
<span class="t" style="left:52.10px;top:454px;font:normal 12.6px/1 'Liberation Sans', sans-serif;color:#474747;letter-spacing:0.006px;">Код товара A-789-B</span>
<span class="t" style="left:305.90px;top:340px;font:normal 13.8px/1 'Liberation Mono', monospace;color:#34985a;letter-spacing:0.111px;transform:scaleY(1.1);transform-origin:0 10px;">1234550000</span>
<span class="t" style="left:305.40px;top:369px;font:normal 12.6px/1 'Liberation Sans', sans-serif;color:#474747;letter-spacing:0.211px;">1531122025</span>
<span class="t" style="left:305.40px;top:397px;font:normal 12.6px/1 'Liberation Sans', sans-serif;color:#474747;letter-spacing:0.060px;">74951234567</span>
<span class="t" style="left:305.40px;top:426px;font:normal 12.6px/1 'Liberation Sans', sans-serif;color:#474747;letter-spacing:0.120px;">245050</span>
<span class="t" style="left:305.40px;top:454px;font:normal 12.6px/1 'Liberation Sans', sans-serif;color:#474747;transform:scaleX(1.0300);transform-origin:1px 0;">789</span>
<svg style="left:297px;top:331px" width="163" height="31" viewBox="0 0 163 31"><rect x="1.3" y="1.7" width="160.3" height="27.9" fill="none" stroke="#1a73e8" stroke-width="1.8"/></svg>
<div class="a" style="left:454.4px;top:356.4px;width:8.6px;height:8.6px;background:#0b57d0;border-radius:50%;border:0.8px solid #fff;box-sizing:border-box"></div>
<div class="a" style="left:769.2px;top:333px;width:7.6px;height:24.8px;background:#d9dbdf;border-radius:3.8px"></div>
<div class="a" style="left:767.5px;top:594.3px;width:10.5px;height:15.4px;background:#f8f9fa;box-sizing:border-box;border:1px solid #e4e4e4"></div>
<div class="a" style="left:767.5px;top:609.7px;width:10.5px;height:15.4px;background:#f8f9fa;box-sizing:border-box;border:1px solid #e4e4e4"></div>
<svg style="left:770px;top:599.6px" width="6" height="3.6" viewBox="0 0 6 3.6"><path d="M0 3.6 H6 L3 0 Z" fill="#8a8d91"/></svg>
<svg style="left:770px;top:615.6px" width="6" height="3.6" viewBox="0 0 6 3.6"><path d="M0 0 H6 L3 3.6 Z" fill="#8a8d91"/></svg>
<div class="a" style="left:1px;top:625px;width:777px;height:12.4px;background:#fff;"></div>
<div class="a" style="left:1px;top:625px;width:43.5px;height:12.4px;background:#f8f9fa;"></div>
<div class="a" style="left:44px;top:625px;width:1px;height:12.4px;background:#c4c4c4;"></div>
<div class="a" style="left:1px;top:624.6px;width:777px;height:1px;background:#e2e2e2;"></div>
<div class="a" style="left:47px;top:627px;width:182px;height:7.8px;background:#dadce0;border-radius:4px"></div>
<div class="a" style="left:737.4px;top:625px;width:15px;height:12.4px;background:#f8f9fa;box-sizing:border-box;border:1px solid #e4e4e4"></div>
<div class="a" style="left:752px;top:625px;width:15.4px;height:12.4px;background:#f8f9fa;box-sizing:border-box;border:1px solid #e4e4e4"></div>
<div class="a" style="left:767.4px;top:625px;width:10.6px;height:12.4px;background:#f8f9fa;"></div>
<svg style="left:742.8px;top:628.2px" width="3.6" height="6" viewBox="0 0 3.6 6"><path d="M3.6 0 V6 L0 3 Z" fill="#8a8d91"/></svg>
<svg style="left:758.4px;top:628.2px" width="3.6" height="6" viewBox="0 0 3.6 6"><path d="M0 0 V6 L3.6 3 Z" fill="#8a8d91"/></svg>
<div class="a" style="left:1px;top:637px;width:777px;height:1px;background:#e1e3e6;"></div>
<div class="a" style="left:1px;top:638px;width:830px;height:35px;background:#f9fbfd;"></div>
<svg style="left:54.3px;top:650.6px" width="10.6" height="10.6" viewBox="0 0 10.6 10.6"><path d="M5.3 0 V10.6 M0 5.3 H10.6" stroke="#444746" stroke-width="1.6"/></svg>
<svg style="left:90.8px;top:651.2px" width="13.4" height="9.6" viewBox="0 0 13.4 9.6"><path d="M0 0.9 H13.4 M0 4.8 H13.4 M0 8.7 H13.4" stroke="#444746" stroke-width="1.5"/></svg>
<div class="a" style="left:128px;top:638px;width:80px;height:34px;background:#e1e9f7;"></div>
<span class="t" style="left:138.60px;top:649px;font:bold 13px/1 'Liberation Sans', sans-serif;color:#0b57d0;transform:scaleX(1.0447);transform-origin:0px 0;">Лист1</span>
<svg style="left:189px;top:654.4px" width="8" height="4.4" viewBox="0 0 8 4.4"><path d="M0 0 H8 L4 4.4 Z" fill="#0b57d0"/></svg>
<div class="a" style="left:778px;top:216px;width:54px;height:457px;background:#f9fbfd;"></div>
<svg style="left:795.4px;top:188.1px" width="17.6" height="17.6" viewBox="0 0 17.6 17.6"><path d="M2.2 0 H15.4 A2.2 2.2 0 0 1 17.6 2.2 V13.7 L13.7 17.6 H2.2 A2.2 2.2 0 0 1 0 15.4 V2.2 A2.2 2.2 0 0 1 2.2 0 Z" fill="#4285f4"/><path d="M13.7 0 H15.4 A2.2 2.2 0 0 1 17.6 2.2 V3.9 H13.7 Z" fill="#1967d2"/><rect x="13.7" y="3.9" width="3.9" height="9.8" fill="#fbbc04"/><path d="M0 13.7 H3.6 V17.6 H2.2 A2.2 2.2 0 0 1 0 15.4 Z" fill="#188038"/><rect x="3.6" y="13.7" width="10.1" height="3.9" fill="#34a853"/><path d="M13.7 13.7 H17.6 L13.7 17.6 Z" fill="#ea4335"/><rect x="3.6" y="3.9" width="10.1" height="9.8" fill="#fff"/></svg>
<span class="t" style="left:799.70px;top:193px;font:bold 8.4px/1 'Liberation Sans', sans-serif;color:#4285f4;letter-spacing:-0.3px;">31</span>
<svg style="left:795.5px;top:241px" width="17.6" height="17.6" viewBox="0 0 17.6 17.6"><rect x="0" y="0" width="17.6" height="17.6" rx="2" fill="#fbbc04"/><path d="M8.8 3.4 A3.6 3.6 0 0 1 10.7 10.1 V11.7 H6.9 V10.1 A3.6 3.6 0 0 1 8.8 3.4 Z" fill="#fff"/><rect x="6.9" y="12.7" width="3.8" height="1.5" fill="#fff"/></svg>
<svg style="left:796.1999999999999px;top:293.4px" width="17.6" height="17.6" viewBox="0 0 17.6 17.6"><circle cx="8.2" cy="9.5" r="6.3" fill="none" stroke="#2a7cf0" stroke-width="2.9"/><path d="M5.2 9.2 L7.6 11.6 L12.6 6.2" fill="none" stroke="#2a7cf0" stroke-width="2.6"/><circle cx="14.4" cy="4" r="2.1" fill="#0b57d0"/></svg>
<svg style="left:797.9px;top:347.7px" width="13.4" height="16" viewBox="0 0 13.4 16"><path d="M0 15.8 V11.2 A3.5 3.5 0 0 1 3.5 7.7 H10 A3.4 3.4 0 0 1 13.4 11.1 V12.4 A3.4 3.4 0 0 1 10 15.8 Z" fill="#7aa7f5"/><rect x="3.1" y="7.7" width="6.9" height="8.1" fill="#0b57d0"/><circle cx="6.6" cy="3.3" r="3.3" fill="#0b57d0"/></svg>
<svg style="left:798.3px;top:399.8px" width="12.6" height="18" viewBox="0 0 12.6 18"><defs><clipPath id="pin"><path d="M6.3 0 A6.3 6.3 0 0 1 12.6 6.3 C12.6 10.2 7.6 13.4 6.3 18 C5 13.4 0 10.2 0 6.3 A6.3 6.3 0 0 1 6.3 0 Z"/></clipPath></defs><g clip-path="url(#pin)"><rect width="12.6" height="18" fill="#34a853"/><path d="M6.3 6.3 L1.6 2.2 L6 -1 L13 -1 L12 4 Z" fill="#1a73e8"/><path d="M6.3 6.3 L1.6 2.2 L-1 3 L-1 10 L1.4 10.2 Z" fill="#ea4335"/><path d="M6.3 6.3 L1.4 10.2 L0 11 L4.4 15 L9 8.6 Z" fill="#fbbc04"/><circle cx="6.3" cy="6.3" r="2" fill="#fff"/></g></svg>
<div class="a" style="left:795.4px;top:450.6px;width:18px;height:1px;background:#dfe1e5;"></div>
<svg style="left:796.4px;top:484px" width="16" height="19" viewBox="0 0 16 19"><g fill="none" stroke="#f07a14" stroke-width="3.3" stroke-linecap="round" stroke-linejoin="round"><path d="M7.6 2.4 L14 6 V13.6"/><path d="M2.4 5.6 V12.8 L8.6 16.4"/></g></svg>
<svg style="left:797.8px;top:539.6px" width="13.2" height="13.2" viewBox="0 0 13.2 13.2"><path d="M6.6 0 V13.2 M0 6.6 H13.2" stroke="#1f1f1f" stroke-width="1.8"/></svg>
<svg style="left:801.4px;top:639.8px" width="6.6" height="10.4" viewBox="0 0 6.6 10.4"><path d="M1 1 L5.2 5.2 L1 9.4" fill="none" stroke="#5f6368" stroke-width="1.7"/></svg>
<div class="a" style="left:124px;top:215.1px;width:510.2px;height:38.9px;background:transparent;border-radius:8.3px;box-shadow:1.5px 2.5px 3.2px rgba(0,0,0,0.55)"></div>
<div class="a" style="left:127.4px;top:218.5px;width:503.4px;height:32.1px;background:transparent;border-radius:4.9px;box-shadow:inset 1.5px 2.5px 3.2px rgba(0,0,0,0.55)"></div>
<svg style="left:114px;top:205.5px" width="540" height="62" viewBox="0 0 540 62"><rect x="11.7" y="11.3" width="506.8" height="35.5" rx="6.6" fill="none" stroke="#000" stroke-width="3.4"/></svg>
<div class="a" style="left:134.5px;top:229px;white-space:pre;font:13px/1 'Liberation Mono',monospace;-webkit-text-stroke:0.2px;transform:scaleX(0.8804);transform-origin:0 0"><span style="color:#202124">=ARRAYFORMULA(ЕСЛИ(</span><span style="color:#f59e2e">A2:A</span><span style="color:#202124">&lt;&gt;</span><span style="color:#23894a">&quot;&quot;</span><span style="color:#202124">;REGEXREPLACE(</span><span style="color:#f59e2e">A2:A</span><span style="color:#202124">;</span><span style="color:#23894a">&quot;[^\d]&quot;</span><span style="color:#202124">;</span><span style="color:#23894a">&quot;&quot;</span><span style="color:#202124">);</span><span style="color:#23894a">&quot;&quot;</span><span style="color:#202124">))</span></div>
<!-- tab titles (own layer) -->
<span class="t" style="left:69.40px;top:14px;font:normal 12.2px/1 'Liberation Sans', sans-serif;color:#e3e3e3;transform:scaleX(0.9308);transform-origin:0px 0;will-change:transform;-webkit-text-stroke:0.3px #e3e3e3;">Хостинговое сообщество «Tim</span>
<div class="a" style="left:208px;top:8px;width:24px;height:24px;will-change:transform;background:linear-gradient(90deg,rgba(0,0,0,0),#000 95%)"></div>
<span class="t" style="left:293.90px;top:14px;font:normal 12.2px/1 'Liberation Sans', sans-serif;color:#e3e3e3;transform:scaleX(0.9275);transform-origin:1px 0;will-change:transform;-webkit-text-stroke:0.3px #e3e3e3;">Новая таблица - Google Табли</span>
<div class="a" style="left:432px;top:8px;width:24px;height:24px;will-change:transform;background:linear-gradient(90deg,rgba(54,54,54,0),#363636 95%)"></div>
</div>
</div>
</body></html>
